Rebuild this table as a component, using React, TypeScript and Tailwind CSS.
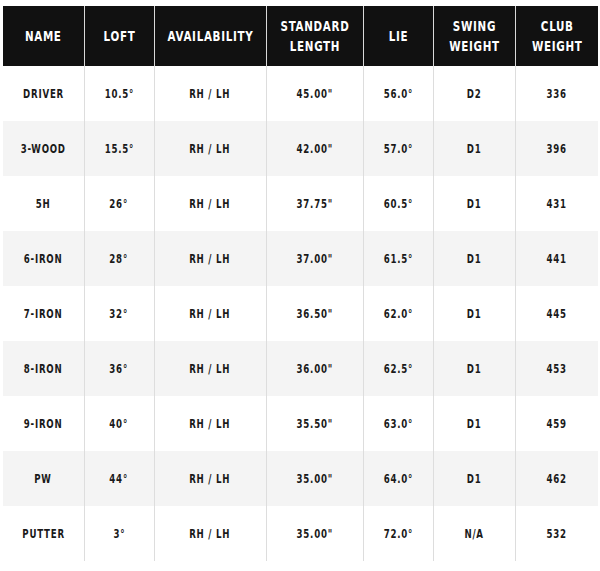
const columns = [
  { label: ["NAME"], width: "w-[81px]" },
  { label: ["LOFT"], width: "w-[70px]" },
  { label: ["AVAILABILITY"], width: "w-[112px]" },
  { label: ["STANDARD", "LENGTH"], width: "w-[97px]" },
  { label: ["LIE"], width: "w-[70px]" },
  { label: ["SWING", "WEIGHT"], width: "w-[82px]" },
  { label: ["CLUB", "WEIGHT"], width: "w-[83px]" },
];

const rows = [
  ["DRIVER", "10.5°", "RH / LH", "45.00\"", "56.0°", "D2", "336"],
  ["3-WOOD", "15.5°", "RH / LH", "42.00\"", "57.0°", "D1", "396"],
  ["5H", "26°", "RH / LH", "37.75\"", "60.5°", "D1", "431"],
  ["6-IRON", "28°", "RH / LH", "37.00\"", "61.5°", "D1", "441"],
  ["7-IRON", "32°", "RH / LH", "36.50\"", "62.0°", "D1", "445"],
  ["8-IRON", "36°", "RH / LH", "36.00\"", "62.5°", "D1", "453"],
  ["9-IRON", "40°", "RH / LH", "35.50\"", "63.0°", "D1", "459"],
  ["PW", "44°", "RH / LH", "35.00\"", "64.0°", "D1", "462"],
  ["PUTTER", "3°", "RH / LH", "35.00\"", "72.0°", "N/A", "532"],
];

export default function App() {
  return (
    <div className="w-[600px] h-[571px] bg-white pt-[6px] pl-[3px] font-['DejaVu_Sans_Condensed','DejaVu_Sans',sans-serif]">
      <table className="table-fixed border-collapse w-[595px]">
        <thead>
          <tr className="bg-[#111111] h-[60px]">
            {columns.map((c, i) => (
              <th
                key={i}
                className={`${c.width} ${i > 0 ? "border-l border-[#d9d9d9]" : ""} text-white text-[14px] font-bold tracking-[0.06em] leading-[20px] text-center align-middle`}
              >
                {c.label.map((l) => (
                  <div key={l} className="scale-x-[0.82]">
                    {l}
                  </div>
                ))}
              </th>
            ))}
          </tr>
        </thead>
        <tbody>
          {rows.map((r, ri) => (
            <tr key={ri} className={`h-[55px] ${ri % 2 === 1 ? "bg-[#f4f4f4]" : "bg-white"}`}>
              {r.map((cell, ci) => (
                <td
                  key={ci}
                  className={`${ci > 0 ? "border-l border-[#dddddd]" : ""} text-center align-middle text-[12px] font-bold tracking-[0.08em] text-[#1a1a1a]`}
                >
                  <span className="inline-block scale-x-[0.8]">{cell}</span>
                </td>
              ))}
            </tr>
          ))}
        </tbody>
      </table>
    </div>
  );
}
